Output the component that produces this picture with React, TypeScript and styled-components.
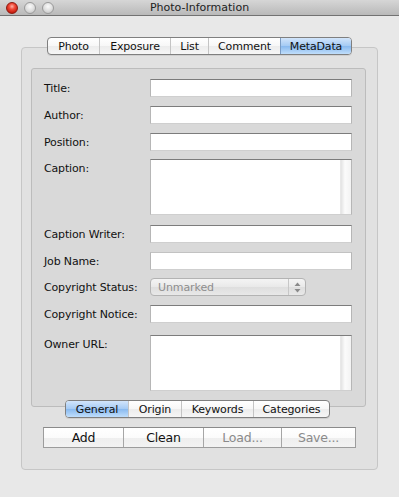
import React from "react";
import styled, { createGlobalStyle } from "styled-components";

const Global = createGlobalStyle`
  html, body { margin: 0; padding: 0; }
  body {
    width: 399px;
    height: 497px;
    overflow: hidden;
    background: #e8e8e8;
    font-family: "DejaVu Sans", "Liberation Sans", sans-serif;
    font-size: 11px;
    color: #1a1a1a;
  }
`;

const Window = styled.div`
  width: 399px;
  height: 497px;
  display: flex;
  flex-direction: column;
  background: #e8e8e8;
`;

const TitleBar = styled.div`
  height: 15px;
  flex: none;
  display: flex;
  align-items: center;
  position: relative;
  background: linear-gradient(#d6d6d6, #b9b9b9);
  border-bottom: 1px solid #727272;
`;

const Lights = styled.div`
  display: flex;
  gap: 6px;
  padding-left: 6px;
  margin-top: 1px;
`;

const Light = styled.span<{ $red?: boolean }>`
  width: 12px;
  height: 12px;
  border-radius: 50%;
  box-sizing: border-box;
  border: 1px solid ${(p) => (p.$red ? "#8c1a10" : "#9a9a9a")};
  background: ${(p) =>
    p.$red
      ? "radial-gradient(circle at 50% 35%, #ffb3a8 0%, #f04a38 35%, #c2170b 80%)"
      : "radial-gradient(circle at 50% 35%, #fafafa 0%, #e2e2e2 45%, #c4c4c4 90%)"};
`;

const Title = styled.div`
  position: absolute;
  left: 0;
  right: 0;
  top: 0;
  height: 15px;
  line-height: 15px;
  text-align: center;
  font-size: 11px;
  color: #222;
`;

const Body = styled.div`
  padding: 21px 21px 0 21px;
  display: flex;
  flex-direction: column;
`;

const TabStrip = styled.div<{ $width: number }>`
  align-self: center;
  display: flex;
  height: 18px;
  width: ${(p) => p.$width}px;
  box-sizing: border-box;
  border: 1px solid #7f7f7f;
  border-radius: 4px;
  overflow: hidden;
  position: relative;
  z-index: 2;
  box-shadow: 0 1px 0 rgba(0, 0, 0, 0.08);
  background: linear-gradient(#ffffff, #f7f7f7 50%, #ececec 51%, #f6f6f6);
`;

const Tab = styled.div<{ $w: number; $active?: boolean }>`
  width: ${(p) => p.$w}px;
  flex: none;
  display: flex;
  align-items: center;
  justify-content: center;
  font-size: 11px;
  letter-spacing: -0.15px;
  color: #111;
  box-sizing: border-box;
  border-left: 1px solid #c4c4c4;
  &:first-child { border-left: none; }
  ${(p) =>
    p.$active &&
    `
    background: linear-gradient(#d2e5fb, #a4caf4 50%, #88b9ef 51%, #c0defb);
    border-left-color: #7b9cc4;
  `}
`;

const OuterBox = styled.div`
  margin-top: -8px;
  height: 423px;
  box-sizing: border-box;
  border: 1px solid #c6c6c6;
  border-radius: 4px;
  background: #e1e1e1;
  padding: 20px 11px 0 9px;
  display: flex;
  flex-direction: column;
`;

const InnerPanel = styled.div`
  height: 339px;
  box-sizing: border-box;
  border: 1px solid #bcbcbc;
  border-radius: 3px;
  background: #d9d9d9;
  padding: 10px 13px 0 12px;
  display: grid;
  grid-template-columns: 106px 202px;
  align-content: start;
`;

const Label = styled.div<{ $top: number }>`
  margin-top: ${(p) => p.$top}px;
  height: 18px;
  padding-top: 1px;
  box-sizing: border-box;
  line-height: 18px;
  font-size: 11px;
  letter-spacing: -0.15px;
  color: #111;
  white-space: nowrap;
`;

const TextField = styled.div<{ $top: number; $h?: number; $soft?: boolean }>`
  margin-top: ${(p) => p.$top}px;
  height: ${(p) => p.$h ?? 18}px;
  box-sizing: border-box;
  background: #ffffff;
  border: 1px solid #b6b6b6;
  border-top-color: ${(p) => (p.$soft ? "#c2c2c2" : "#7c7c7c")};
  border-bottom-color: #cfcfcf;
  display: flex;
  justify-content: flex-end;
`;

const ScrollTrack = styled.div`
  width: 10px;
  height: 100%;
  background: linear-gradient(to right, #e3e3e3, #fbfbfb 40%, #f3f3f3);
  border-left: 1px solid #e8e8e8;
`;

const PopUp = styled.div<{ $top: number }>`
  margin-top: ${(p) => p.$top}px;
  width: 156px;
  height: 18px;
  box-sizing: border-box;
  border: 1px solid #b3b3b3;
  border-radius: 4px;
  background: linear-gradient(#f4f4f4, #e9e9e9 50%, #dedede 51%, #e8e8e8);
  display: flex;
  align-items: center;
`;

const PopText = styled.div`
  flex: 1;
  padding-left: 7px;
  font-size: 11px;
  color: #8e8e8e;
  letter-spacing: -0.1px;
`;

const PopArrows = styled.div`
  width: 16px;
  height: 100%;
  border-left: 1px solid #c7c7c7;
  display: flex;
  align-items: center;
  justify-content: center;
`;

const BottomTabs = styled(TabStrip)`
  margin-top: -7px;
  align-self: center;
  transform: translateX(-1px);
`;

const ButtonRow = styled.div`
  align-self: center;
  margin-top: 9px;
  display: flex;
  height: 21px;
  width: 313px;
  box-sizing: border-box;
  border: 1px solid #9c9c9c;
  border-top-color: #8a8a8a;
  background: linear-gradient(#ffffff, #fbfbfb 50%, #eeeeee 51%, #f3f3f3);
  transform: translateX(1px);
`;

const Button = styled.div<{ $w: number; $disabled?: boolean }>`
  width: ${(p) => p.$w}px;
  flex: none;
  display: flex;
  align-items: center;
  justify-content: center;
  font-size: 12.5px;
  letter-spacing: -0.2px;
  color: ${(p) => (p.$disabled ? "#8a8a8a" : "#111")};
  box-sizing: border-box;
  border-left: 1px solid #a6a6a6;
  &:first-child { border-left: none; }
`;

const fields: {
  label: string;
  top: number;
  kind: "text" | "area" | "popup";
  soft?: boolean;
}[] = [
  { label: "Title:", top: 0, kind: "text" },
  { label: "Author:", top: 9, kind: "text" },
  { label: "Position:", top: 9, kind: "text" },
  { label: "Caption:", top: 8, kind: "area" },
  { label: "Caption Writer:", top: 10, kind: "text" },
  { label: "Job Name:", top: 9, kind: "text", soft: true },
  { label: "Copyright Status:", top: 8, kind: "popup" },
  { label: "Copyright Notice:", top: 9, kind: "text" },
  { label: "Owner URL:", top: 12, kind: "area" },
];

export default function App() {
  return (
    <>
      <Global />
      <Window>
        <TitleBar>
          <Lights>
            <Light $red />
            <Light />
            <Light />
          </Lights>
          <Title>Photo-Information</Title>
        </TitleBar>
        <Body>
          <TabStrip $width={305}>
            <Tab $w={51}>Photo</Tab>
            <Tab $w={71}>Exposure</Tab>
            <Tab $w={38}>List</Tab>
            <Tab $w={72}>Comment</Tab>
            <Tab $w={71} $active>
              MetaData
            </Tab>
          </TabStrip>
          <OuterBox>
            <InnerPanel>
              {fields.map((f) => (
                <React.Fragment key={f.label}>
                  <Label $top={f.top}>{f.label}</Label>
                  {f.kind === "text" && <TextField $top={f.top} $soft={f.soft} />}
                  {f.kind === "area" && (
                    <TextField $top={f.top} $h={56}>
                      <ScrollTrack />
                    </TextField>
                  )}
                  {f.kind === "popup" && (
                    <PopUp $top={f.top}>
                      <PopText>Unmarked</PopText>
                      <PopArrows>
                        <svg width="7" height="11" viewBox="0 0 7 11">
                          <path d="M3.5 0.5 L6.5 4 L0.5 4 Z" fill="#8a8a8a" />
                          <path d="M3.5 10.5 L6.5 7 L0.5 7 Z" fill="#8a8a8a" />
                        </svg>
                      </PopArrows>
                    </PopUp>
                  )}
                </React.Fragment>
              ))}
            </InnerPanel>
            <BottomTabs $width={265}>
              <Tab $w={62} $active>
                General
              </Tab>
              <Tab $w={53}>Origin</Tab>
              <Tab $w={72}>Keywords</Tab>
              <Tab $w={76}>Categories</Tab>
            </BottomTabs>
            <ButtonRow>
              <Button $w={79}>Add</Button>
              <Button $w={80}>Clean</Button>
              <Button $w={78} $disabled>
                Load...
              </Button>
              <Button $w={74} $disabled>
                Save...
              </Button>
            </ButtonRow>
          </OuterBox>
        </Body>
      </Window>
    </>
  );
}
